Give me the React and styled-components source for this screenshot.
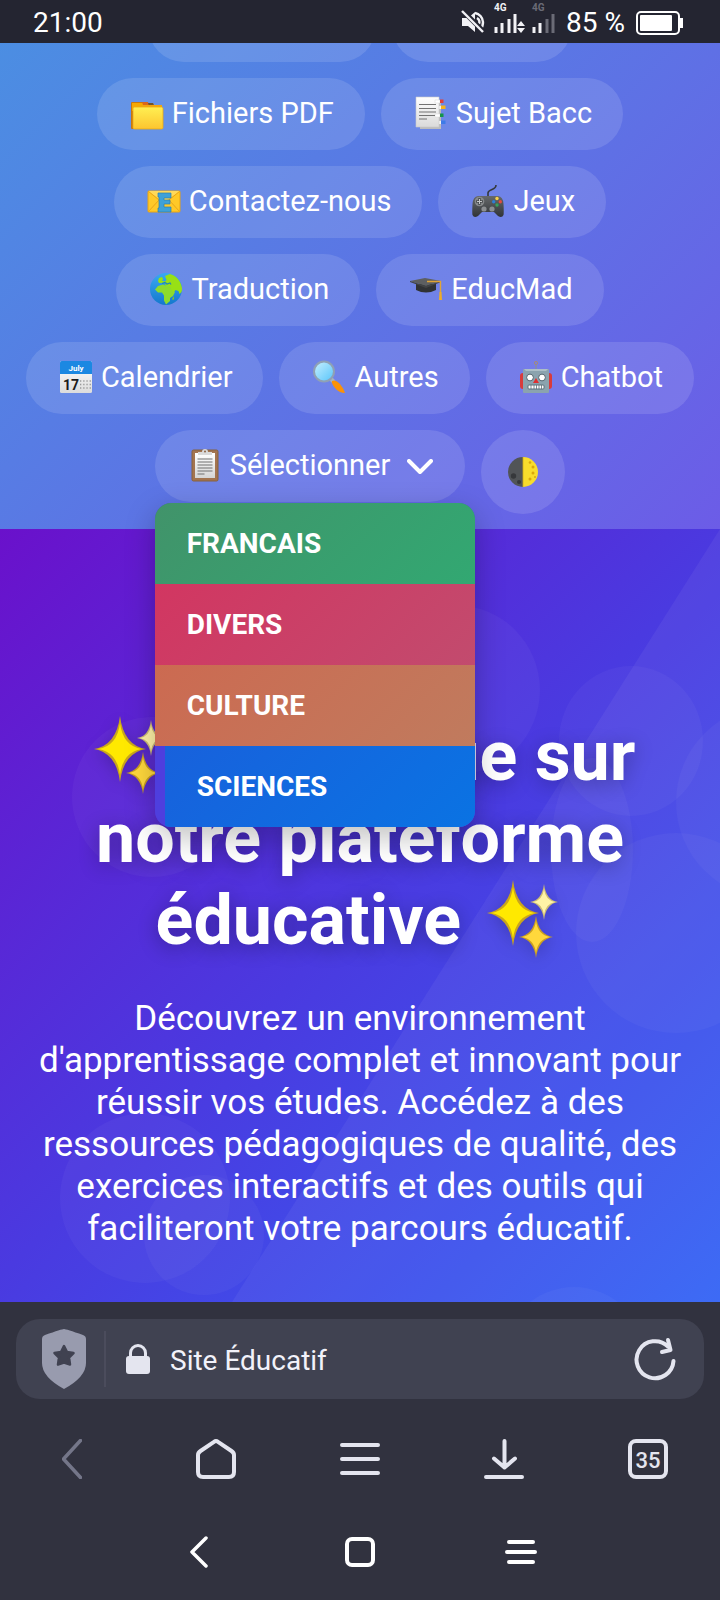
import React from "react";
import styled, { createGlobalStyle } from "styled-components";

const GlobalStyle = createGlobalStyle`
  *, *::before, *::after { box-sizing: border-box; }
  body { margin: 0; background: #31323f; font-family: Roboto, "Liberation Sans", sans-serif; color: #fff; }
  button { font: inherit; color: inherit; border: 0; background: none; padding: 0; cursor: pointer; }
  h1, p, ul { margin: 0; padding: 0; }
  a { color: inherit; text-decoration: none; }
  svg { display: block; flex: none; }
`;

const Phone = styled.div`
  display: flex;
  flex-direction: column;
  min-height: 100vh;
  overflow: hidden;
`;

const StatusBar = styled.header`
  position: relative;
  z-index: 10;
  display: flex;
  align-items: center;
  justify-content: space-between;
  height: 43px;
  padding: 2px 36px 0 33px;
  background: #242531;
  font-size: 28px;
  line-height: 40px;
`;

const StatusIcons = styled.div`
  display: flex;
  align-items: center;
  gap: 11px;
`;

const Page = styled.main`
  flex: 1;
  display: flex;
  flex-direction: column;
  margin-top: -53px;
`;

const Nav = styled.nav`
  position: relative;
  z-index: 5;
  display: flex;
  flex-direction: column;
  gap: 16px;
  padding: 0 16px 15px;
  background: linear-gradient(135deg, #4a90e2, #6c5ce7);
`;

const Row = styled.div`
  display: flex;
  justify-content: center;
  align-items: flex-start;
  gap: 16px;
`;

const Pill = styled.a`
  display: flex;
  align-items: center;
  gap: 7px;
  height: 72px;
  padding: 0 31px 3px 32px;
  border-radius: 36px;
  background: rgba(255, 255, 255, 0.12);
  font-size: 29px;
  white-space: nowrap;
`;

const PillTail = styled.span`
  width: ${(p) => p.$width}px;
  height: 72px;
  border-radius: 36px;
  background: rgba(255, 255, 255, 0.12);
`;

const Select = styled.div`
  position: relative;
`;

const SelectButton = styled(Pill).attrs({ as: "button", type: "button" })`
  && {
    padding: 0 32px 3px;
    background: rgba(255, 255, 255, 0.12);
    font-size: 29px;
  }
`;

const ChevronDown = styled.svg`
  margin: 4px 0 0 10px;
`;

const RoundButton = styled.button`
  && {
    display: flex;
    align-items: center;
    justify-content: center;
    width: 84px;
    height: 84px;
    border-radius: 50%;
    background: rgba(255, 255, 255, 0.12);
  }
`;

const Menu = styled.ul`
  position: absolute;
  top: 73px;
  left: 0;
  width: 320px;
  overflow: hidden;
  list-style: none;
  border-radius: 16px;
  background: rgba(78, 64, 222, 0.96);
  box-shadow: 0 10px 30px rgba(0, 0, 0, 0.25);
`;

const Option = styled.a`
  display: block;
  margin-left: ${(p) => (p.$active ? 10 : 0)}px;
  padding: 0 32px;
  background: linear-gradient(135deg, ${(p) => p.$from}, ${(p) => p.$to});
  font-size: 28px;
  font-weight: 700;
  line-height: 81px;
`;

const Hero = styled.section`
  position: relative;
  flex: 1;
  padding: 186px 32px 0;
  text-align: center;
  background: linear-gradient(135deg, #6a11cb, #4a3ae0 50%, #3363f5);
`;

const Decor = styled.svg`
  position: absolute;
  inset: 0;
  width: 100%;
  height: 100%;
`;

const Title = styled.h1`
  position: relative;
  font-size: 70px;
  font-weight: 700;
  line-height: 82px;
  text-shadow: 0 4px 20px rgba(0, 0, 0, 0.3);
`;

const SparkleSvg = styled.svg`
  display: inline-block;
  vertical-align: -16px;
  filter: drop-shadow(0 4px 8px rgba(0, 0, 0, 0.2));
`;

const Lead = styled.p`
  position: relative;
  margin-top: 37px;
  font-size: 35px;
  line-height: 42px;
`;

const Chrome = styled.footer`
  display: flex;
  flex-direction: column;
  padding: 17px 0 15px;
  background: #31323f;
  color: #e4e5ef;
`;

const AddressBar = styled.div`
  display: flex;
  align-items: center;
  height: 80px;
  margin: 0 16px;
  padding: 0 28px 0 26px;
  border-radius: 24px;
  background: #404251;
`;

const Divider = styled.span`
  width: 2px;
  height: 56px;
  margin: 0 20px 0 18px;
  background: #4b4c5c;
`;

const Address = styled.span`
  flex: 1;
  margin-left: 20px;
  padding-top: 2px;
  font-size: 28px;
  color: #f2f2fa;
`;

const Bar = styled.div`
  display: flex;
  height: 120px;
`;

const SystemBar = styled(Bar)`
  height: 66px;
  padding: 0 119px;
`;

const BarButton = styled.button`
  flex: 1;
  display: flex;
  align-items: center;
  justify-content: center;
`;

const TabCount = styled.span`
  display: flex;
  align-items: center;
  justify-content: center;
  width: 40px;
  height: 40px;
  padding-top: 2px;
  border: 4px solid #e4e5ef;
  border-radius: 8px;
  font-size: 22px;
  font-weight: 500;
`;

const Emoji = ({ children }) => (
  <svg width="36" height="36" viewBox="0 0 36 36" aria-hidden="true">{children}</svg>
);

const Folder = () => (
  <Emoji>
    <path d="M2 8q0-1 1-1h11l2 1h8l1 2h8v5H4v19H3q-1 0-1-1z" fill="#c8780c" />
    <path d="M3 8h11v4H5v4H3z" fill="#f6a800" />
    <path d="M13 7h6l1 3h-6z" fill="#d9661b" />
    <path d="M19 8h5l1 3h-5z" fill="#6b5330" />
    <path d="M13 10h20v4H13z" fill="#f3a50c" />
    <rect x="4" y="12" width="30" height="22" rx="1.5" fill="url(#folder)" stroke="#eaa915" strokeWidth="0.8" />
    <defs><linearGradient id="folder" x1="0" y1="0" x2="0" y2="1"><stop stopColor="#ffef52" /><stop offset="1" stopColor="#fdc52f" /></linearGradient></defs>
  </Emoji>
);

const Tabs = () => (
  <Emoji>
    <path d="M7 6h21v28H7z" fill="#bdbdbd" />
    <path d="M23 5h5v3h-5zM24 11h5v3h-5zM23 19h5v3h-5zM24 26h5v3h-5z" fill="#f4f4f4" />
    <path d="M3 2h23v30H3z" fill="url(#sheet)" stroke="#c9c9c9" strokeWidth="0.6" />
    <path d="M22 5h5v3h-5zM22 19h5v3h-5z" fill="#fff" stroke="#d5d5d5" strokeWidth="0.5" />
    <path d="M27 4.500h3.500V8H27z" fill="#e0403a" />
    <path d="M28 10.500h4.500V14H28z" fill="#f6b51c" />
    <path d="M27 18.500h3.500V22H27z" fill="#15954a" />
    <path d="M28 25.500h4.500V29H28z" fill="#3d7be8" />
    <path d="M6 9.500h17M6 13.500h17M6 17h17M6 20.500h16M6 24h8" stroke="#737373" strokeWidth="1.2" />
    <defs><linearGradient id="sheet" x1="0" y1="0" x2="0" y2="1"><stop stopColor="#fff" /><stop offset="1" stopColor="#dadada" /></linearGradient></defs>
  </Emoji>
);

const Mail = () => (
  <Emoji>
    <rect x="2" y="8" width="32" height="21" rx="1" fill="#ffc928" stroke="#e8a413" />
    <path d="M2 8h32L18 19z" fill="#ffd95a" />
    <path d="M2 29l11-12M34 29L23 17M2 8l11 9M34 8l-11 9" stroke="#eaa619" fill="none" />
    <path d="M12 10h13v5h-7v2h6v4h-6v3h7v5H12v-4h1V14h-1z" fill="#3fa1d8" stroke="#2b7fae" strokeWidth="0.7" />
  </Emoji>
);

const Gamepad = () => (
  <Emoji>
    <path d="M18 14V10q0-2 4-3.500T26 2" fill="none" stroke="#34383c" strokeWidth="1.600" />
    <path d="M8 13Q3 13.500 2.500 21Q2 30 2.500 32Q4 35.500 8 33L12 29H24L28 33Q32 35.500 33.500 32Q34 30 33.500 21Q33 13.500 28 13Z" fill="url(#pad)" />
    <circle cx="9.500" cy="18.500" r="4.800" fill="#85888a" />
    <path d="M9.500 15v7M6 18.500h7" stroke="#303335" strokeWidth="2" />
    <path d="M9.500 15.800v5.400M6.800 18.500h5.400" stroke="#c4c6c7" strokeWidth="1" />
    <circle cx="14" cy="26" r="2.600" fill="#8c8f92" /><circle cx="22" cy="26" r="2.600" fill="#8c8f92" />
    <circle cx="27" cy="15.500" r="1.700" fill="#f7d04a" /><circle cx="30.300" cy="18.800" r="1.700" fill="#e34b3d" />
    <circle cx="27" cy="22" r="1.700" fill="#35a35b" /><circle cx="23.700" cy="18.800" r="1.700" fill="#2d7fd6" />
    <defs><linearGradient id="pad" x1="0" y1="0" x2="0" y2="1"><stop stopColor="#66696b" /><stop offset="1" stopColor="#303336" /></linearGradient></defs>
  </Emoji>
);

const Globe = () => (
  <Emoji>
    <circle cx="18" cy="18" r="16" fill="url(#sea)" />
    <path d="M10 10l1-3 3-1 1 2-1 2 2 0 1 1-3 1-3 0zM17 5l5-2q7 2 10 8t1.500 10l-2 2-1-3-3-1-2 3-2-1-1-4-4-1-1-2-1-3 2-2z" fill="#98e015" />
    <path d="M10 15l5-1.500 4 1.500 3 0 2 5 3 1-2 4-3 2 0 3-4 3.500-2-4 0-5-2-3-4 0-3-3z" fill="#8ddb2c" />
    <path d="M14 12.500l3-1 2 1.500 3-1 1 1.500" stroke="#2287b8" strokeWidth="1.200" fill="none" />
    <path d="M24 28l2-3v3l-1 1z" fill="#83c51d" />
    <defs><linearGradient id="sea" x1="0" y1="0" x2="0" y2="1"><stop stopColor="#39a9f2" /><stop offset="1" stopColor="#1478cd" /></linearGradient></defs>
  </Emoji>
);

const Cap = () => (
  <Emoji>
    <path d="M8 13v6q10 5 20 0v-6z" fill="#303234" />
    <path d="M2 10L17 7l16 3-15 5z" fill="#5d5f61" />
    <path d="M2 10l16 5 15-5v1l-15 6-16-6z" fill="#414345" />
    <path d="M19 10.500h13.500V22" fill="none" stroke="#e1a435" strokeWidth="1.400" />
    <path d="M31.500 21l2 0 0.500 8-3 0z" fill="#efac27" />
  </Emoji>
);

const CalendarIcon = () => (
  <Emoji>
    <rect x="2" y="2" width="32" height="32" rx="1.500" fill="url(#cal)" />
    <path d="M2 15V3.500Q2 2 3.500 2h29Q34 2 34 3.500V15z" fill="#1b88e2" />
    <text x="18" y="11.500" textAnchor="middle" fontSize="8" fontWeight="700" fill="#fff">July</text>
    <text x="5" y="31" fontSize="14" fontWeight="700" fill="#1c1c1c">17</text>
    <path d="M22 22h11M22 25.500h11M22 29h11" stroke="#999" strokeWidth="1.300" strokeDasharray="1.300 1.900" />
    <defs><linearGradient id="cal" x1="0" y1="0" x2="0" y2="1"><stop stopColor="#fff" /><stop offset="1" stopColor="#dcdcdc" /></linearGradient></defs>
  </Emoji>
);

const Magnifier = () => (
  <Emoji>
    <path d="M20 20l3 3" stroke="#aab4ba" strokeWidth="4" />
    <path d="M21 22q4-2 8 3t5 9q-6 0-10-5t-3-7z" fill="#fb9207" />
    <circle cx="13" cy="12.500" r="10" fill="url(#lens)" stroke="#8fa1b5" strokeWidth="2" />
    <defs><linearGradient id="lens" x1="0" y1="0" x2="1" y2="1"><stop stopColor="#c8f0ff" /><stop offset="1" stopColor="#55c4fa" /></linearGradient></defs>
  </Emoji>
);

const Robot = () => (
  <Emoji>
    <circle cx="18" cy="4" r="1.600" fill="none" stroke="#a48c78" />
    <path d="M18 6v5" stroke="#8a8f98" strokeWidth="1.200" />
    <path d="M5 14q-3 0-3 3v10q0 3 3 3zM31 14q3 0 3 3v10q0 3-3 3z" fill="#d83b3b" />
    <rect x="5" y="10" width="26" height="24" rx="1" fill="#8ba3ae" />
    <path d="M6 10h24l-2 2H8z" fill="#adbfc7" />
    <circle cx="12" cy="18.500" r="3.400" fill="#fff" stroke="#51636d" /><circle cx="24" cy="18.500" r="3.400" fill="#fff" stroke="#51636d" />
    <path d="M18 19l3 5h-6z" fill="#e02f2f" />
    <rect x="10" y="26" width="16" height="4" rx="1" fill="#fff" stroke="#5d707a" />
    <path d="M13 26v4M16 26v4M18.500 26v4M21 26v4M23.500 26v4" stroke="#5d707a" strokeWidth="0.800" />
  </Emoji>
);

const Clipboard = () => (
  <Emoji>
    <rect x="5" y="3" width="26" height="31" rx="1.500" fill="#a37450" stroke="#85603f" />
    <path d="M8 6h20v25H8z" fill="url(#paper)" />
    <path d="M11 8V5h4q0-3 3-3t3 3h4v3z" fill="#dadada" />
    <circle cx="18" cy="4.500" r="1" fill="#8a6346" />
    <path d="M10.500 12h15M10.500 15h15M10.500 18h15M10.500 21h15M10.500 24h15M10.500 27h7" stroke="#707070" strokeWidth="1.200" />
    <defs><linearGradient id="paper" x1="0" y1="0" x2="0" y2="1"><stop stopColor="#fff" /><stop offset="1" stopColor="#d5d5d5" /></linearGradient></defs>
  </Emoji>
);

const Moon = () => (
  <Emoji>
    <path d="M18 3a15 15 0 0 0 0 30z" fill="#515457" />
    <path d="M18 3a15 15 0 0 1 0 30z" fill="#f8dd2c" />
    <circle cx="8.500" cy="22" r="2.700" fill="#36383b" /><circle cx="14" cy="28" r="2" fill="#36383b" />
    <g fill="#d8a80e"><circle cx="25" cy="8.500" r="1.300" /><circle cx="28" cy="13" r="1.500" /><circle cx="28" cy="19" r="1.500" /><circle cx="25" cy="25" r="1.500" /><circle cx="30" cy="23" r="1" /></g>
    <path d="M18 3v30" stroke="#cfae16" strokeWidth="0.800" />
  </Emoji>
);

const star = (x, y, w, h, t) => {
  const k = w * t;
  return `M${x} ${y - h}Q${x + k} ${y - k} ${x + w} ${y}Q${x + k} ${y + k} ${x} ${y + h}Q${x - k} ${y + k} ${x - w} ${y}Q${x - k} ${y - k} ${x} ${y - h}z`;
};

const Sparkles = () => (
  <SparkleSvg width="86" height="80" viewBox="0 0 86 80" aria-hidden="true">
    <path d={star(35, 33, 26, 33, 0.14)} fill="#c9a51c" />
    <path d={star(35, 33, 22, 26, 0.13)} fill="#ffe900" />
    <path d={star(66, 22, 14, 18, 0.14)} fill="#cdbd76" />
    <path d={star(66, 22, 11, 13, 0.14)} fill="#fff3a6" />
    <path d={star(58, 57, 17, 21, 0.14)} fill="#c99f22" />
    <path d={star(58, 57, 14, 16, 0.14)} fill="#ffd83c" />
  </SparkleSvg>
);

const circles = [
  [455, 161, 85, 85], [631, 212, 72, 75], [773, 273, 97, 97], [676, 404, 100, 100],
  [592, 321, 41, 92], [152, 268, 80, 80], [145, 669, 85, 85], [204, 706, 60, 60], [574, 830, 72, 72],
];

const rows = [
  [[Folder, "Fichiers PDF"], [Tabs, "Sujet Bacc"]],
  [[Mail, "Contactez-nous"], [Gamepad, "Jeux"]],
  [[Globe, "Traduction"], [Cap, "EducMad"]],
  [[CalendarIcon, "Calendrier"], [Magnifier, "Autres"], [Robot, "Chatbot"]],
];

const options = [
  ["FRANCAIS", "#41936a", "#32a872"],
  ["DIVERS", "#d23661", "#c24b6e"],
  ["CULTURE", "#cc6a51", "#c07b5e"],
  ["SCIENCES", "#1861dc", "#0a73e3", true],
];

export default function App() {
  return (
    <Phone>
      <GlobalStyle />
      <StatusBar>
        <span>21:00</span>
        <StatusIcons>
          <svg width="94" height="43" viewBox="0 0 94 43">
            <path d="M1 17h6l7-6v20l-7-6H1z" fill="#f2f2f6" />
            <path d="M14 12a10 10 0 0 1 8 9a11 11 0 0 1-3 8M16 17a5 5 0 0 1 2 6" fill="none" stroke="#f2f2f6" strokeWidth="2.4" />
            <path d="M2 10L23 31" stroke="#242531" strokeWidth="5" />
            <path d="M1 10L22 31" stroke="#f2f2f6" strokeWidth="2.4" />
            <text x="33" y="10" fontSize="10" fontWeight="700" fill="#f2f2f6">4G</text>
            <text x="71" y="10" fontSize="10" fontWeight="700" fill="#6a6b76">4G</text>
            <path d="M35 32v-6M41 32v-10M48 32v-14M54 32v-19" stroke="#f2f2f6" strokeWidth="3" />
            <path d="M56 25l4-5l4 5zM56 27l4 5l4-5z" fill="#f2f2f6" />
            <path d="M73 32v-6M79 32v-10" stroke="#f2f2f6" strokeWidth="3" />
            <path d="M86 32v-14M92 32v-19" stroke="#6a6b76" strokeWidth="3" />
          </svg>
          <span>85 %</span>
          <svg width="48" height="24" viewBox="0 0 48 24">
            <rect x="1" y="1" width="42" height="22" rx="4" fill="none" stroke="#fff" strokeWidth="2" />
            <rect x="4" y="4" width="32" height="16" rx="1" fill="#fff" />
            <path d="M44 7h3v10h-3z" fill="#fff" />
          </svg>
        </StatusIcons>
      </StatusBar>
      <Page>
        <Nav>
          <Row><PillTail $width={228} /><PillTail $width={180} /></Row>
          {rows.map((row, i) => (
            <Row key={i}>
              {row.map(([Icon, label]) => <Pill href="#" key={label}><Icon />{label}</Pill>)}
            </Row>
          ))}
          <Row>
            <Select>
              <SelectButton aria-expanded="true">
                <Clipboard />
                Sélectionner
                <ChevronDown width="26" height="16" viewBox="0 0 26 16">
                  <path d="M2 2l11 11L24 2" fill="none" stroke="#fff" strokeWidth="4" strokeLinecap="round" strokeLinejoin="round" />
                </ChevronDown>
              </SelectButton>
              <Menu>
                {options.map(([label, from, to, active]) => (
                  <li key={label}><Option href="#" $from={from} $to={to} $active={active}>{label}</Option></li>
                ))}
              </Menu>
            </Select>
            <RoundButton type="button" aria-label="Mode sombre"><Moon /></RoundButton>
          </Row>
        </Nav>
        <Hero>
          <Decor viewBox="0 0 720 773" preserveAspectRatio="xMaxYMin slice">
            <path d="M720 0V773H232Z" fill="#fff" opacity="0.05" />
            {circles.map(([x, y, a, b], i) => <ellipse key={i} cx={x} cy={y} rx={a} ry={b} fill="#fff" opacity="0.035" />)}
          </Decor>
          <Title><Sparkles /> Bienvenue sur notre plateforme éducative <Sparkles /></Title>
          <Lead>
            Découvrez un environnement d'apprentissage complet et innovant pour réussir vos études. Accédez à des
            ressources pédagogiques de qualité, des exercices interactifs et des outils qui faciliteront votre parcours éducatif.
          </Lead>
        </Hero>
      </Page>
      <Chrome>
        <AddressBar>
          <svg width="44" height="60" viewBox="0 0 44 60">
            <path d="M22 0Q24 0 41 6Q44 7 44 10V34Q44 48 22 60Q0 48 0 34V10Q0 7 3 6Q20 0 22 0z" fill="#989bae" />
            <path d="M22 17l3 6 6.500 1-4.500 4.500 1 7-6-2-6 2 1-7-4.500-4.500 6.500-1z" fill="#404251" stroke="#404251" strokeWidth="2.500" strokeLinejoin="round" />
          </svg>
          <Divider />
          <svg width="24" height="30" viewBox="0 0 24 30">
            <path d="M4.500 14V9a7.500 7.500 0 0 1 15 0v5" fill="none" stroke="#e4e5ef" strokeWidth="3" />
            <rect y="12" width="24" height="18" rx="3" fill="#e4e5ef" />
          </svg>
          <Address>Site Éducatif</Address>
          <svg width="42" height="44" viewBox="0 0 42 44">
            <path d="M39.500 24A18.500 18.500 0 1 1 34 9.500" fill="none" stroke="#e4e5ef" strokeWidth="4" strokeLinecap="round" />
            <path d="M34 3l2.500 10-8.500 2" fill="none" stroke="#e4e5ef" strokeWidth="4" strokeLinecap="round" strokeLinejoin="round" />
          </svg>
        </AddressBar>
        <Bar>
          <BarButton aria-label="Précédent">
            <svg width="20" height="40" viewBox="0 0 20 40"><path d="M18.500 1.500L1.500 20l17 18.500" fill="none" stroke="#747689" strokeWidth="3.500" strokeLinecap="round" strokeLinejoin="round" /></svg>
          </BarButton>
          <BarButton aria-label="Accueil">
            <svg width="40" height="40" viewBox="0 0 40 40"><path d="M18 2.800q2-1.500 4 0L35.500 12q2.500 1.700 2.500 4v17q0 5-5 5H7q-5 0-5-5V16q0-2.300 2.500-4z" fill="none" stroke="#e4e5ef" strokeWidth="4" strokeLinejoin="round" /></svg>
          </BarButton>
          <BarButton aria-label="Menu">
            <svg width="40" height="32" viewBox="0 0 40 32"><path d="M2 2h36M2 16h36M2 30h36" stroke="#e4e5ef" strokeWidth="4" strokeLinecap="round" /></svg>
          </BarButton>
          <BarButton aria-label="Téléchargements">
            <svg width="40" height="40" viewBox="0 0 40 40"><path d="M20.500 2v26M10 19.500l10.500 9 10.500-9M2 38h36" fill="none" stroke="#e4e5ef" strokeWidth="4" strokeLinecap="round" strokeLinejoin="round" /></svg>
          </BarButton>
          <BarButton aria-label="Onglets"><TabCount>35</TabCount></BarButton>
        </Bar>
        <SystemBar>
          <BarButton aria-label="Retour">
            <svg width="18" height="32" viewBox="0 0 18 32"><path d="M16 2L2 16l14 14" fill="none" stroke="#fff" strokeWidth="3.500" strokeLinecap="round" strokeLinejoin="round" /></svg>
          </BarButton>
          <BarButton aria-label="Écran d'accueil">
            <svg width="30" height="30" viewBox="0 0 30 30"><rect x="2" y="2" width="26" height="26" rx="5" fill="none" stroke="#fff" strokeWidth="4" /></svg>
          </BarButton>
          <BarButton aria-label="Applications récentes">
            <svg width="32" height="26" viewBox="0 0 32 26"><path d="M4 3h24M2 13h28M4 23h24" stroke="#fff" strokeWidth="4" strokeLinecap="round" /></svg>
          </BarButton>
        </SystemBar>
      </Chrome>
    </Phone>
  );
}
